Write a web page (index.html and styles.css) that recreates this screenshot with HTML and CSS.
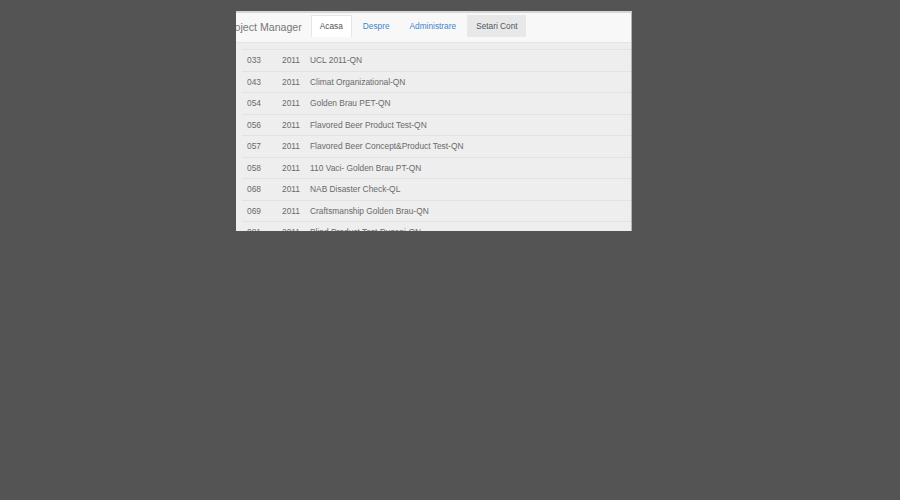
FILE: index.html
```html
<!DOCTYPE html>
<html>
<head>
<meta charset="utf-8">
<link rel="stylesheet" href="styles.css">
</head>
<body>
<div class="frame">
  <nav class="navbar">
    <span class="brand">Project Manager</span>
    <ul class="tabs">
      <li class="tab active">Acasa</li>
      <li class="tab link">Despre</li>
      <li class="tab link">Administrare</li>
      <li class="tab selected">Setari Cont</li>
    </ul>
  </nav>
  <div class="content">
    <div class="table">
      <div class="row"><span class="c1">033</span><span class="c2">2011</span><span class="c3">UCL 2011-QN</span></div>
      <div class="row"><span class="c1">043</span><span class="c2">2011</span><span class="c3">Climat Organizational-QN</span></div>
      <div class="row"><span class="c1">054</span><span class="c2">2011</span><span class="c3">Golden Brau PET-QN</span></div>
      <div class="row"><span class="c1">056</span><span class="c2">2011</span><span class="c3">Flavored Beer Product Test-QN</span></div>
      <div class="row"><span class="c1">057</span><span class="c2">2011</span><span class="c3">Flavored Beer Concept&amp;Product Test-QN</span></div>
      <div class="row"><span class="c1">058</span><span class="c2">2011</span><span class="c3">110 Vaci- Golden Brau PT-QN</span></div>
      <div class="row"><span class="c1">068</span><span class="c2">2011</span><span class="c3">NAB Disaster Check-QL</span></div>
      <div class="row"><span class="c1">069</span><span class="c2">2011</span><span class="c3">Craftsmanship Golden Brau-QN</span></div>
      <div class="row"><span class="c1">081</span><span class="c2">2011</span><span class="c3">Blind Product Test Ruseni-QN</span></div>
    </div>
  </div>
</div>
</body>
</html>
```
FILE: styles.css
```css
html, body {
  margin: 0;
  padding: 0;
  background: #545454;
  font-family: "Liberation Sans", Arial, sans-serif;
}
.frame {
  margin: 11px 0 0 236px;
  width: 395px;
  height: 218px;
  overflow: hidden;
  border-top: 2px solid #d6d6d6;
  border-right: 1px solid #b4b4b4;
  background: #eeeeee;
}
.navbar {
  display: flex;
  align-items: flex-start;
  height: 29px;
  background: #f8f8f8;
  border-bottom: 1px solid #e4e4e4;
}
.brand {
  flex: none;
  margin-left: -12px;
  margin-right: 9px;
  line-height: 29px;
  font-size: 10.6px;
  color: #777;
  white-space: nowrap;
}
.tabs {
  display: flex;
  list-style: none;
  margin: 2px 0 0 0;
  padding: 0;
  gap: 2px;
}
.tab {
  height: 22px;
  line-height: 22px;
  padding: 0 9px;
  font-size: 8.3px;
  white-space: nowrap;
  box-sizing: border-box;
}
.active {
  background: #fff;
  border: 1px solid #e6e6e6;
  border-bottom: none;
  line-height: 21px;
  padding: 0 8px;
  color: #555;
}
.link {
  color: #3f86c8;
}
.selected {
  background: #e8e8e8;
  color: #4c5966;
  padding: 0 8px 0 9px;
}
.content {
  padding: 6px 0 0 6px;
}
.table {
  border-top: 1px solid #e2e2e2;
}
.row {
  display: flex;
  height: 21.5px;
  line-height: 21px;
  box-sizing: border-box;
  border-bottom: 1px solid #e2e2e2;
  font-size: 8.4px;
  color: #6a6a6a;
  white-space: nowrap;
}
.c1 {
  width: 35px;
  padding-left: 5px;
}
.c2 {
  width: 28px;
}
```
